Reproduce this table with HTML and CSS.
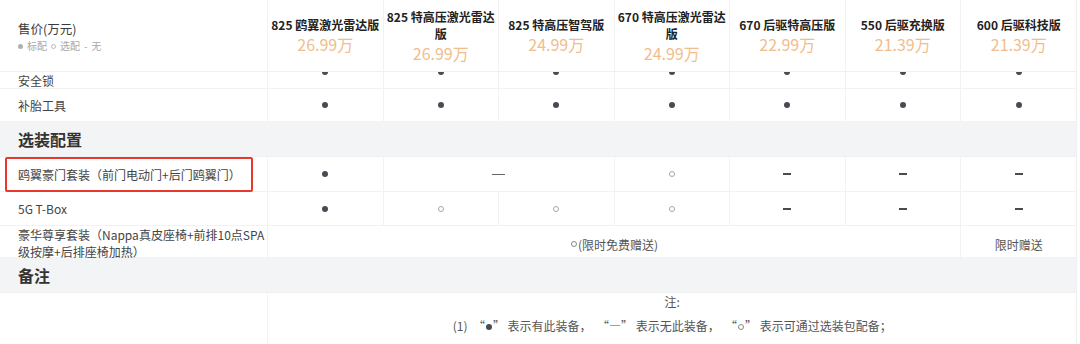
FILE: index.html
```html
<!DOCTYPE html>
<html lang="zh-CN">
<head>
<meta charset="utf-8">
<link rel="stylesheet" href="styles.css">
</head>
<body>
<div class="table">
  <div class="row head">
    <div class="cell label">
      <div class="price-title">售价(万元)</div>
      <div class="legend"><span class="sdot"></span>标配<span class="scirc"></span>选配<span class="sep">-</span>无</div>
    </div>
    <div class="cell model"><div class="mname">825 鸥翼激光雷达版</div><div class="mprice">26.99万</div></div>
    <div class="cell model"><div class="mname">825 特高压激光雷达版</div><div class="mprice">26.99万</div></div>
    <div class="cell model"><div class="mname">825 特高压智驾版</div><div class="mprice">24.99万</div></div>
    <div class="cell model"><div class="mname">670 特高压激光雷达版</div><div class="mprice">24.99万</div></div>
    <div class="cell model"><div class="mname">670 后驱特高压版</div><div class="mprice">22.99万</div></div>
    <div class="cell model"><div class="mname">550 后驱充换版</div><div class="mprice">21.39万</div></div>
    <div class="cell model"><div class="mname">600 后驱科技版</div><div class="mprice">21.39万</div></div>
  </div>

  <div class="row clipped">
    <div class="cell label">安全锁</div>
    <div class="cell"><span class="dot top"></span></div>
    <div class="cell"><span class="dot top"></span></div>
    <div class="cell"><span class="dot top"></span></div>
    <div class="cell"><span class="dot top"></span></div>
    <div class="cell"><span class="dot top"></span></div>
    <div class="cell"><span class="dot top"></span></div>
    <div class="cell"><span class="dot top"></span></div>
  </div>

  <div class="row r33">
    <div class="cell label">补胎工具</div>
    <div class="cell"><span class="dot"></span></div>
    <div class="cell"><span class="dot"></span></div>
    <div class="cell"><span class="dot"></span></div>
    <div class="cell"><span class="dot"></span></div>
    <div class="cell"><span class="dot"></span></div>
    <div class="cell"><span class="dot"></span></div>
    <div class="cell"><span class="dot"></span></div>
  </div>

  <div class="section">选装配置</div>

  <div class="row r35">
    <div class="cell label marked">鸥翼豪门套装（前门电动门+后门鸥翼门）<span class="redbox"></span></div>
    <div class="cell"><span class="dot"></span></div>
    <div class="cell span2"><span class="longdash"></span></div>
    <div class="cell"><span class="circ"></span></div>
    <div class="cell"><span class="dash"></span></div>
    <div class="cell"><span class="dash"></span></div>
    <div class="cell"><span class="dash"></span></div>
  </div>

  <div class="row r34">
    <div class="cell label">5G T-Box</div>
    <div class="cell"><span class="dot"></span></div>
    <div class="cell"><span class="circ"></span></div>
    <div class="cell"><span class="circ"></span></div>
    <div class="cell"><span class="circ"></span></div>
    <div class="cell"><span class="dash"></span></div>
    <div class="cell"><span class="dash"></span></div>
    <div class="cell"><span class="dash"></span></div>
  </div>

  <div class="row r32">
    <div class="cell label twoline">豪华尊享套装（Nappa真皮座椅+前排10点SPA<br>级按摩+后排座椅加热）</div>
    <div class="cell span6 txt"><span class="icirc"></span>(限时免费赠送)</div>
    <div class="cell txt">限时赠送</div>
  </div>

  <div class="section">备注</div>

  <div class="row note">
    <div class="cell label"></div>
    <div class="cell span7 notes">
      <div class="n1">注:</div>
      <div class="n2">(1) &nbsp;“<span class="idot"></span>” 表示有此装备， &nbsp;“—” 表示无此装备， &nbsp;“<span class="icirc"></span>” 表示可通过选装包配备；</div>
    </div>
  </div>
</div>
</body>
</html>
```

FILE: styles.css
```css
* { box-sizing: border-box; margin: 0; padding: 0; }
html, body { background: #fff; }
body {
  width: 1080px;
  height: 344px;
  overflow: hidden;
  font-family: "Noto Sans CJK SC", "Noto Sans", sans-serif;
  color: #444;
  font-size: 12px;
}
.table {
  width: 1077px;
  border-right: 1px solid #f0f0f0;
}
.row {
  display: grid;
  grid-template-columns: 268px repeat(7, 115.5px);
  border-bottom: 1px solid #f2f2f2;
}
.cell {
  border-right: 1px solid #f2f2f2;
  display: flex;
  align-items: center;
  justify-content: center;
  line-height: 17px;
}
.cell:last-child { border-right: none; }
.cell.label {
  justify-content: flex-start;
  padding-left: 18px;
  color: #444;
}
.head { height: 72px; border-bottom: 1px solid #f0f0f0; }
.head .label {
  flex-direction: column;
  align-items: flex-start;
  justify-content: flex-start;
  padding-top: 20px;
}
.price-title { font-size: 12.5px; line-height: 18px; color: #3a3a3a; }
.legend { font-size: 10px; line-height: 14px; color: #a8a8a8; margin-top: 1px; }
.sdot { display: inline-block; width: 5px; height: 5px; border-radius: 50%; background: #b0b0b0; vertical-align: 1px; margin-right: 4px; }
.scirc { display: inline-block; width: 5px; height: 5px; border-radius: 50%; border: 1px solid #b8b8b8; vertical-align: 1px; margin: 0 4px; }
.sep { margin: 0 4px; }
.model {
  flex-direction: column;
  text-align: center;
  padding: 0 3px;
}
.mname { font-weight: 700; font-size: 12px; line-height: 17px; color: #222; }
.mprice { font-size: 16px; line-height: 22px; color: #f2bd8c; }

.clipped { height: 17px; overflow: hidden; }
.clipped .cell { align-items: flex-start; }
.clipped .label { align-items: center; padding-top: 0; }
.r33 { height: 33px; }
.r35 { height: 35px; }
.r34 { height: 34px; }
.r32 { height: 32px; }

.dot { display: inline-block; width: 6px; height: 6px; border-radius: 50%; background: #4a4a55; }
.dot.top { margin-top: -3px; }
.circ { display: inline-block; width: 6px; height: 6px; border-radius: 50%; border: 1px solid #a6a6a6; }
.dash { display: inline-block; width: 8px; height: 2px; background: #4a4a55; }
.longdash { display: inline-block; width: 13px; height: 1px; background: #666; }
.icirc { display: inline-block; width: 6px; height: 6px; border-radius: 50%; border: 1px solid #888; margin: 0 1px; vertical-align: 1px; }
.idot { display: inline-block; width: 6px; height: 6px; border-radius: 50%; background: #4a4a55; margin: 0 1px; vertical-align: 1px; }

.span2 { grid-column: span 2; }
.span6 { grid-column: span 6; }
.span7 { grid-column: span 7; }
.txt { color: #555; font-size: 12px; padding-top: 2px; }
.twoline { line-height: 17px; padding-top: 0; }

.section {
  height: 35px;
  background: #f3f4f6;
  font-weight: 700;
  font-size: 16px;
  color: #333;
  padding-left: 18px;
  display: flex;
  align-items: center;
  border-bottom: 1px solid #eef0f2;
}

.marked { position: relative; }
.redbox {
  position: absolute;
  left: 5px;
  top: 0;
  width: 248px;
  height: 35px;
  border: 2px solid #e8382d;
  border-radius: 2px;
}

.note { height: 60px; border-bottom: none; }
.notes {
  flex-direction: column;
  justify-content: flex-start;
  align-items: center;
  color: #555;
}
.n1 { line-height: 18px; }
.n2 { line-height: 30px; }
```
